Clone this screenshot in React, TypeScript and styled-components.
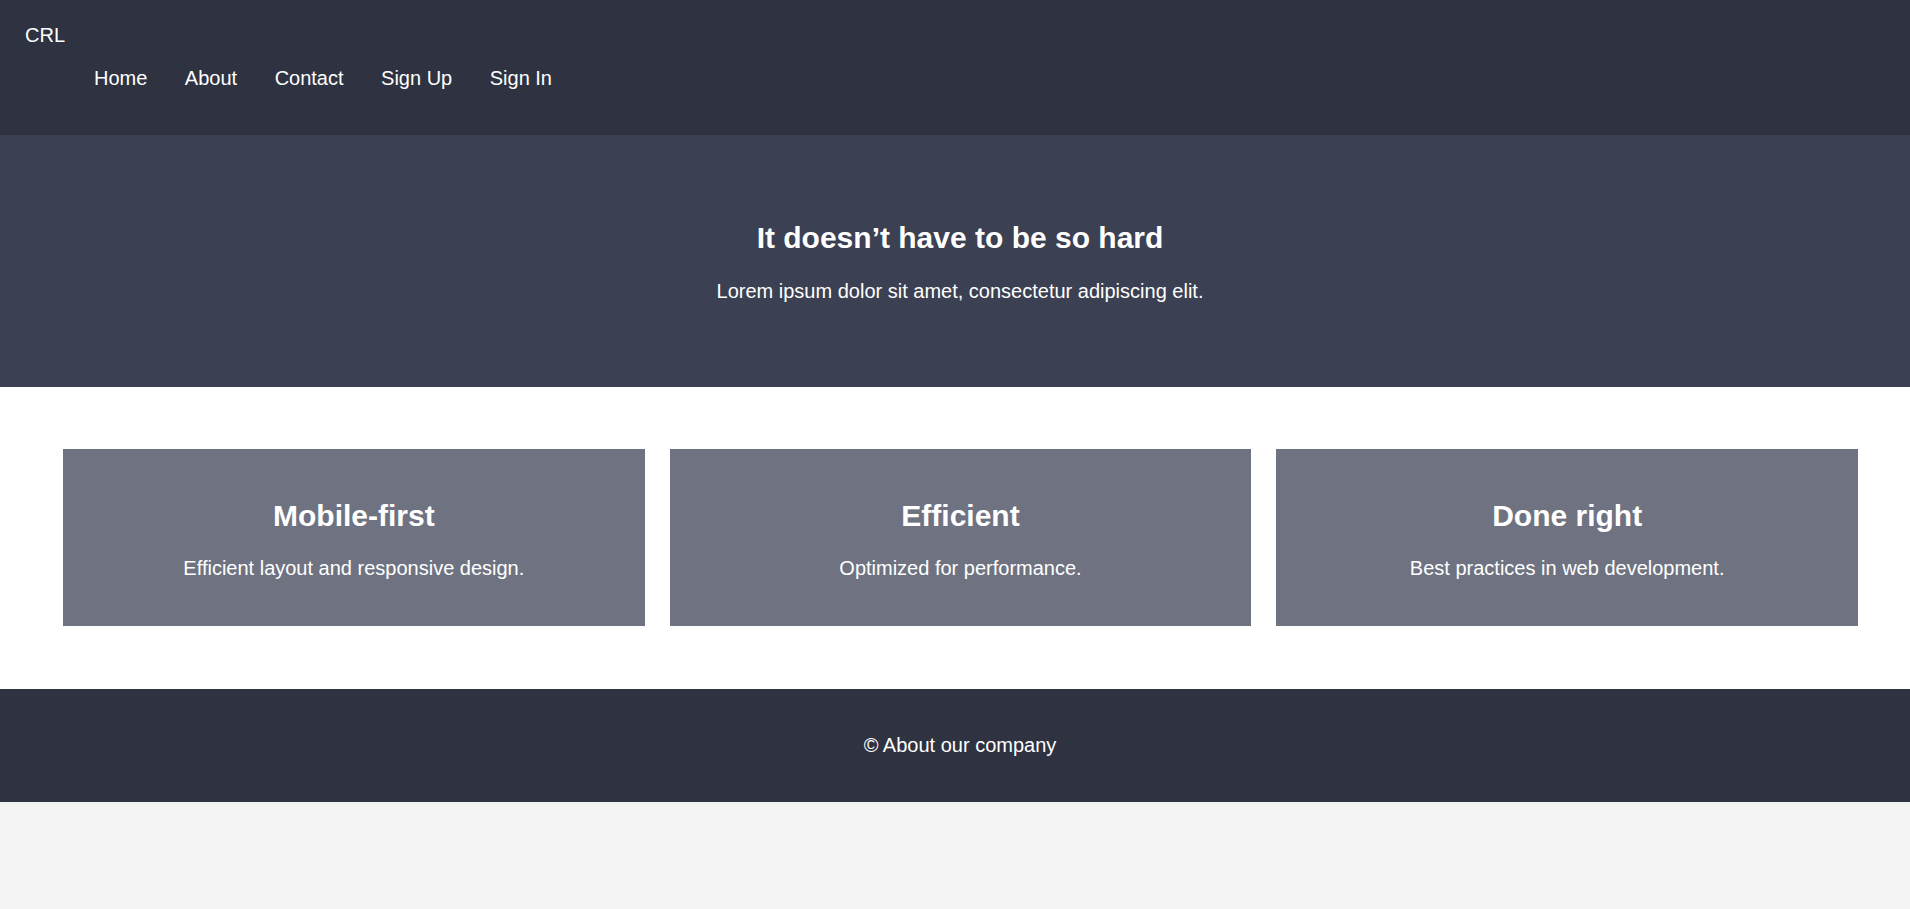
import React from "react";
import styled, { createGlobalStyle } from "styled-components";

const GlobalStyle = createGlobalStyle`
  html, body {
    margin: 0;
    padding: 0;
    background: #f3f3f3;
    font-family: "Liberation Sans", Arial, sans-serif;
    font-size: 20px;
  }
  * { box-sizing: border-box; }
`;

const Header = styled.header`
  background: #2e3241;
  color: #ffffff;
  padding: 24px 0 45px 25px;
  display: flex;
  flex-direction: column;
  gap: 20px;
`;

const Brand = styled.div`
  font-size: 20px;
  line-height: 23px;
`;

const Nav = styled.nav`
  display: flex;
  gap: 37.5px;
  margin-left: 69px;
`;

const NavLink = styled.a`
  color: #ffffff;
  text-decoration: none;
  font-size: 20px;
  line-height: 23px;
`;

const Hero = styled.section`
  background: #3b4052;
  color: #ffffff;
  padding: 86px 20px 84px 30px;
  display: flex;
  flex-direction: column;
  align-items: center;
  gap: 24px;
  text-align: center;
`;

const Title = styled.h1`
  margin: 0;
  font-size: 30px;
  font-weight: 700;
  line-height: 34.5px;
`;

const Lead = styled.p`
  margin: 0;
  font-size: 20px;
  line-height: 23px;
`;

const Features = styled.section`
  background: #ffffff;
  padding: 62px 52px 63px 63px;
  display: grid;
  grid-template-columns: repeat(3, 1fr);
  gap: 25px;
`;

const Card = styled.article`
  background: #6f7381;
  color: #ffffff;
  padding: 50px 20px 46px;
  display: flex;
  flex-direction: column;
  align-items: center;
  gap: 24px;
  text-align: center;
`;

const CardTitle = styled.h2`
  margin: 0;
  font-size: 30px;
  font-weight: 700;
  line-height: 34.5px;
`;

const CardText = styled.p`
  margin: 0;
  font-size: 20px;
  line-height: 23px;
`;

const Footer = styled.footer`
  background: #2e3241;
  color: #ffffff;
  padding: 45px 20px 45px 30px;
  text-align: center;
  font-size: 20px;
  line-height: 23px;
`;

const links = ["Home", "About", "Contact", "Sign Up", "Sign In"];

const features = [
  { title: "Mobile-first", text: "Efficient layout and responsive design." },
  { title: "Efficient", text: "Optimized for performance." },
  { title: "Done right", text: "Best practices in web development." },
];

export default function App() {
  return (
    <>
      <GlobalStyle />
      <Header>
        <Brand>CRL</Brand>
        <Nav>
          {links.map((l) => (
            <NavLink key={l} href="#">
              {l}
            </NavLink>
          ))}
        </Nav>
      </Header>
      <Hero>
        <Title>It doesn’t have to be so hard</Title>
        <Lead>Lorem ipsum dolor sit amet, consectetur adipiscing elit.</Lead>
      </Hero>
      <Features>
        {features.map((f) => (
          <Card key={f.title}>
            <CardTitle>{f.title}</CardTitle>
            <CardText>{f.text}</CardText>
          </Card>
        ))}
      </Features>
      <Footer>© About our company</Footer>
    </>
  );
}
